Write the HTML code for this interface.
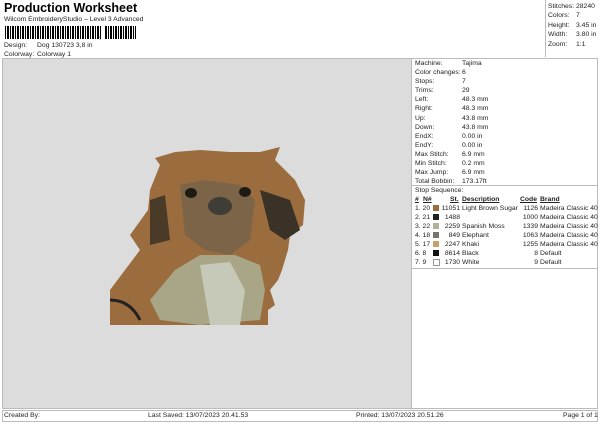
<html><head><style>
body{margin:0;width:600px;height:424px;background:#fff;font-family:"Liberation Sans",sans-serif;color:#222;position:relative;overflow:hidden}
.a{position:absolute;white-space:nowrap;font-size:6.8px;line-height:9px}
</style></head><body>
<div class="a" style="left:4px;top:1px;font-size:12.5px;font-weight:bold;line-height:15px;color:#000">Production Worksheet</div>
<div class="a" style="left:4px;top:15px">Wilcom EmbroideryStudio – Level 3 Advanced</div>
<div style="position:absolute;left:5px;top:26px;width:96px;height:13px;background:repeating-linear-gradient(90deg,#000 0 1px,#fff 1px 2px,#000 2px 4px,#fff 4px 5px)"></div>
<div class="a" style="left:99px;top:31px;font-weight:bold;font-size:9px">,</div>
<div style="position:absolute;left:105px;top:26px;width:31px;height:13px;background:repeating-linear-gradient(90deg,#000 0 2px,#fff 2px 3px,#000 3px 4px,#fff 4px 5px)"></div>
<div class="a" style="left:4px;top:41px">Design:</div><div class="a" style="left:37px;top:41px">Dog 130723 3,8 in</div>
<div class="a" style="left:4px;top:50px">Colorway:</div><div class="a" style="left:37px;top:50px">Colorway 1</div>
<div style="position:absolute;left:545px;top:0;width:54px;height:57px;border-left:1px solid #bbb;border-right:1px solid #bbb"></div>
<div class="a" style="left:548px;top:2px;line-height:9.4px">Stitches:<br>Colors:<br>Height:<br>Width:<br>Zoom:</div>
<div class="a" style="left:576px;top:2px;line-height:9.4px">28240<br>7<br>3.45 in<br>3.80 in<br>1:1</div>
<div style="position:absolute;left:2px;top:58px;width:596px;height:351px;border:1px solid #bbb;box-sizing:border-box"></div>
<div style="position:absolute;left:3px;top:59px;width:408px;height:349px;background:#dcdcdc;border-right:1px solid #bbb"></div>
<div style="position:absolute;left:412px;top:185px;width:186px;border-top:1px solid #bbb"></div>
<div style="position:absolute;left:412px;top:268px;width:186px;border-top:1px solid #bbb"></div>
<div class="a" style="left:415px;top:59px;line-height:9.1px">Machine:<br>Color changes:<br>Stops:<br>Trims:<br>Left:<br>Right:<br>Up:<br>Down:<br>EndX:<br>EndY:<br>Max Stitch:<br>Min Stitch:<br>Max Jump:<br>Total Bobbin:</div>
<div class="a" style="left:462px;top:59px;line-height:9.1px">Tajima<br>6<br>7<br>29<br>48.3 mm<br>48.3 mm<br>43.8 mm<br>43.8 mm<br>0.00 in<br>0.00 in<br>6.9 mm<br>0.2 mm<br>6.9 mm<br>173.17ft</div>
<div class="a" style="left:415px;top:186px">Stop Sequence:</div>
<div class="a" style="left:415px;top:195px;line-height:9px;font-weight:bold;text-decoration:underline">#</div>
<div class="a" style="left:423px;top:195px;font-weight:bold;text-decoration:underline">N#</div>
<div class="a" style="left:450px;top:195px;font-weight:bold;text-decoration:underline">St.</div>
<div class="a" style="left:462px;top:195px;font-weight:bold;text-decoration:underline">Description</div>
<div class="a" style="left:520px;top:195px;font-weight:bold;text-decoration:underline">Code</div>
<div class="a" style="left:540px;top:195px;font-weight:bold;text-decoration:underline">Brand</div>
<div class="a" style="left:415px;top:204px;line-height:9px">1. 20<br>2. 21<br>3. 22<br>4. 18<br>5. 17<br>6. 8<br>7. 9</div>
<div style="position:absolute;left:433px;top:205px;width:6px;height:6px;background:#a06b3a"></div>
<div style="position:absolute;left:433px;top:214px;width:6px;height:6px;background:#1d2420"></div>
<div style="position:absolute;left:433px;top:223px;width:6px;height:6px;background:#b3b09a"></div>
<div style="position:absolute;left:433px;top:232px;width:6px;height:6px;background:#77756a"></div>
<div style="position:absolute;left:433px;top:241px;width:6px;height:6px;background:#c9a06a"></div>
<div style="position:absolute;left:433px;top:250px;width:6px;height:6px;background:#111"></div>
<div style="position:absolute;left:433px;top:259px;width:5px;height:5px;border:1px solid #999;background:#fff"></div>
<div class="a" style="left:440px;top:204px;width:20px;text-align:right;line-height:9px">11051<br>1488<br>2259<br>849<br>2247<br>8614<br>1730</div>
<div class="a" style="left:462px;top:204px;line-height:9px">Light Brown Sugar<br>&nbsp;<br>Spanish Moss<br>Elephant<br>Khaki<br>Black<br>White</div>
<div class="a" style="left:518px;top:204px;width:20px;text-align:right;line-height:9px">1126<br>1000<br>1339<br>1063<br>1255<br>8<br>9</div>
<div class="a" style="left:540px;top:204px;line-height:9px">Madeira Classic 40<br>Madeira Classic 40<br>Madeira Classic 40<br>Madeira Classic 40<br>Madeira Classic 40<br>Default<br>Default</div>
<div style="position:absolute;left:2px;top:410px;width:596px;height:12px;border:1px solid #bbb;box-sizing:border-box"></div>
<div class="a" style="left:4px;top:411px">Created By:</div>
<div class="a" style="left:148px;top:411px">Last Saved: 13/07/2023 20.41.53</div>
<div class="a" style="left:356px;top:411px">Printed: 13/07/2023 20.51.26</div>
<div class="a" style="left:563px;top:411px">Page 1 of 1</div>
<svg style="position:absolute;left:0;top:0" width="600" height="424">
<path d="M110 325 L110 290 L125 270 L140 250 L130 235 L148 210 L150 190 L160 165 L155 158 L175 152 L200 150 L230 152 L260 152 L280 147 L275 160 L295 180 L305 200 L303 225 L290 235 L288 250 L282 270 L278 280 L270 290 L275 305 L268 310 L268 325 Z" fill="#9a6c3e"/>
<path d="M150 300 L175 270 L200 255 L235 255 L260 265 L265 290 L260 320 L200 325 L160 320 Z" fill="#a8a686"/>
<path d="M200 265 L230 262 L245 290 L240 325 L210 325 Z" fill="#c6c9b8"/>
<path d="M180 185 L205 180 L240 185 L255 200 L250 240 L230 255 L205 250 L185 235 Z" fill="#7c6448"/>
<ellipse cx="191" cy="193" rx="6" ry="5" fill="#1e1a14"/><ellipse cx="245" cy="192" rx="6" ry="5" fill="#1e1a14"/>
<ellipse cx="220" cy="206" rx="12" ry="9" fill="#3e3d36"/>
<path d="M260 190 L290 200 L300 230 L285 240 L270 230 Z" fill="#3a3226"/>
<path d="M150 200 L165 195 L170 240 L150 245 Z" fill="#4a3a28"/>
<path d="M110 300 Q130 300 140 320" stroke="#222" stroke-width="3" fill="none"/>
</svg>
</body></html>
